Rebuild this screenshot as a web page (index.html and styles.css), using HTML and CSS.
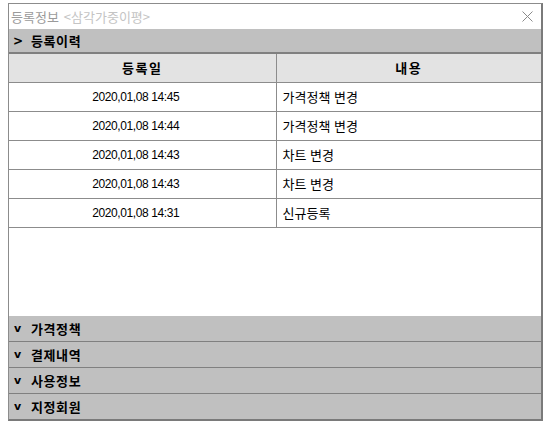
FILE: index.html
```html
<!DOCTYPE html>
<html lang="ko">
<head>
<meta charset="utf-8">
<link rel="stylesheet" href="styles.css">
</head>
<body>
<div class="window">
  <div class="titlebar">
    <span class="title">등록정보</span>
    <span class="subtitle">&lt;삼각가중이평&gt;</span>
    <span class="close">
      <svg width="11" height="11" viewBox="0 0 11 11"><path d="M0.5 0.5 L10.5 10.5 M10.5 0.5 L0.5 10.5" stroke="#8a8a8a" stroke-width="1" fill="none"/></svg>
    </span>
  </div>
  <div class="section open"><span class="arrow">&gt;</span>등록이력</div>
  <div class="tablewrap">
    <table class="grid">
      <thead>
        <tr><th class="c1">등록일</th><th class="c2">내용</th></tr>
      </thead>
      <tbody>
        <tr><td class="date">2020,01,08 14:45</td><td class="desc">가격정책 변경</td></tr>
        <tr><td class="date">2020,01,08 14:44</td><td class="desc">가격정책 변경</td></tr>
        <tr><td class="date">2020,01,08 14:43</td><td class="desc">차트 변경</td></tr>
        <tr><td class="date">2020,01,08 14:43</td><td class="desc">차트 변경</td></tr>
        <tr><td class="date">2020,01,08 14:31</td><td class="desc">신규등록</td></tr>
      </tbody>
    </table>
  </div>
  <div class="section"><span class="arrow v">v</span>가격정책</div>
  <div class="section"><span class="arrow v">v</span>결제내역</div>
  <div class="section"><span class="arrow v">v</span>사용정보</div>
  <div class="section last"><span class="arrow v">v</span>지정회원</div>
</div>
</body>
</html>
```
FILE: styles.css
```css
html, body {
  margin: 0;
  padding: 0;
  background: #ffffff;
}
body {
  font-family: "Noto Sans CJK KR", "Noto Sans", sans-serif;
  font-size: 13px;
  color: #000;
}
.window {
  margin: 3px 0 0 8px;
  width: 532px;
  height: 415px;
  border-left: 1px solid #8c8c8c;
  border-top: 1px solid #8c8c8c;
  border-right: 2px solid #7a7a7a;
  border-bottom: 2px solid #7a7a7a;
  display: flex;
  flex-direction: column;
  background: #fff;
}
.titlebar {
  height: 25px;
  flex: none;
  display: flex;
  align-items: center;
  padding-left: 2px;
  line-height: 1;
}
.title {
  color: #9a9a9a;
  font-size: 13px;
}
.subtitle {
  color: #c4c4c4;
  font-size: 13px;
  margin-left: 5px;
}
.close {
  margin-left: auto;
  margin-right: 8px;
  display: flex;
}
.section {
  flex: none;
  background: #c0c0c0;
  border-bottom: 1px solid #808080;
  display: flex;
  align-items: center;
  font-weight: bold;
  font-size: 13px;
  letter-spacing: 0.6px;
  padding-left: 4px;
  box-sizing: border-box;
  height: 26px;
}
.section.open {
  height: 25px;
  border-bottom: 2px solid #808080;
}
.section.last {
  border-bottom: none;
  height: 25px;
}
.arrow {
  width: 18px;
  display: inline-block;
  font-family: "DejaVu Sans", sans-serif;
  font-weight: bold;
  font-size: 12px;
  letter-spacing: 0;
}
.arrow.v {
  font-size: 11px;
  padding-left: 1px;
  width: 17px;
}
.tablewrap {
  flex: 1;
  background: #fff;
}
.grid {
  width: 100%;
  border-collapse: collapse;
  table-layout: fixed;
}
.grid th, .grid td {
  border: 1px solid #8c8c8c;
  padding: 0;
  box-sizing: border-box;
}
.grid th {
  background: #e3e3e3;
  font-weight: bold;
  text-align: center;
  border-top: none;
  height: 28px;
  letter-spacing: 1.5px;
}
.grid tr > :first-child { border-left: none; }
.grid tr > :last-child { border-right: none; }
.c1 { width: 267px; }
.grid td {
  height: 29px;
}
.grid td.date {
  text-align: center;
  font-family: "Liberation Sans", sans-serif;
  font-size: 12px;
  letter-spacing: -0.4px;
  padding-right: 13px;
}
.grid td.desc {
  padding-left: 6px;
}
```
